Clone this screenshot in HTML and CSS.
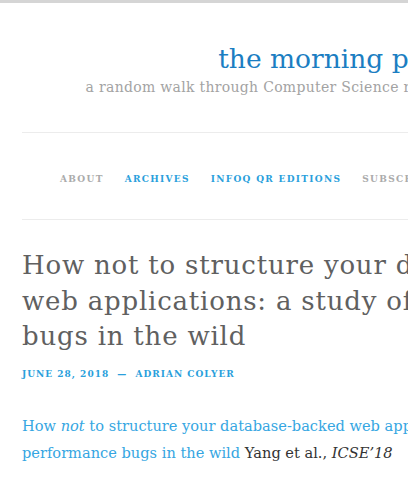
FILE: index.html
```html
<!DOCTYPE html>
<html lang="en">
<head>
<meta charset="utf-8">
<title>the morning paper</title>
<link rel="stylesheet" href="styles.css">
</head>
<body>
<div class="topbar"></div>
<div class="page">
  <header class="masthead">
    <p class="site-title"><a href="#">the morning paper</a></p>
    <p class="tagline">a random walk through Computer Science research, by Adrian Colyer</p>
  </header>

  <nav class="main-nav">
    <ul>
      <li><a href="#">About</a></li>
      <li class="accent"><a href="#">Archives</a></li>
      <li class="accent"><a href="#">InfoQ QR Editions</a></li>
      <li><a href="#">Subscribe</a></li>
    </ul>
  </nav>

  <article class="entry">
    <h1 class="entry-title">How not to structure your database-backed<br>web applications: a study of performance<br>bugs in the wild</h1>
    <div class="entry-meta"><a href="#">June 28, 2018</a> <span class="sep">—</span> <a href="#">Adrian Colyer</a></div>
    <div class="entry-content">
      <p><a href="#">How <em>not</em> to structure your database-backed web applications: a study of<br>performance bugs in the wild</a> Yang et al., <em>ICSE’18</em></p>
    </div>
  </article>
</div>
</body>
</html>
```

FILE: styles.css
```css
html {
  overflow: hidden;
  background: #fff;
}

body {
  margin: 0;
  font-family: "DejaVu Serif", "Liberation Serif", serif;
  color: #333;
}

a {
  text-decoration: none;
}

.topbar {
  height: 3px;
  background: #d5d5d5;
}

.page {
  width: 644px;
  padding: 0 22px;
}

/* site header */
.masthead {
  padding-top: 40px;
  height: 89px;
  text-align: center;
}

.site-title {
  margin: 0;
  font-size: 26.5px;
  line-height: 32px;
}

.site-title a {
  color: #1b7ec2;
}

.tagline {
  margin: 4px 0 0;
  font-size: 14px;
  line-height: 16px;
  letter-spacing: 0.3px;
  color: #a3a3a3;
}

/* primary navigation */
.main-nav {
  border-top: 1px solid #ececec;
  border-bottom: 1px solid #ececec;
  height: 86px;
  display: flex;
  align-items: center;
}

.main-nav ul {
  list-style: none;
  margin: 0;
  padding: 0 0 0 38px;
  display: flex;
  gap: 21px;
}

.main-nav a {
  font-size: 9px;
  font-weight: bold;
  letter-spacing: 1.3px;
  text-transform: uppercase;
  color: #ababab;
}

.main-nav .accent a {
  color: #2a9fdc;
}

/* post */
.entry-title {
  margin: 28px 0 0;
  font-size: 26px;
  font-weight: normal;
  letter-spacing: 0.8px;
  line-height: 35.5px;
  color: #606060;
  white-space: nowrap;
}

.entry-meta {
  margin-top: 14px;
  font-size: 9px;
  font-weight: bold;
  letter-spacing: 1px;
  text-transform: uppercase;
  color: #2a9fdc;
}

.entry-meta a {
  color: #2a9fdc;
}

.entry-meta .sep {
  margin: 0 4px;
}

.entry-content p {
  margin: 33px 0 0;
  font-size: 14.6px;
  line-height: 27px;
  white-space: nowrap;
}

.entry-content a {
  color: #35a6e2;
}
```
